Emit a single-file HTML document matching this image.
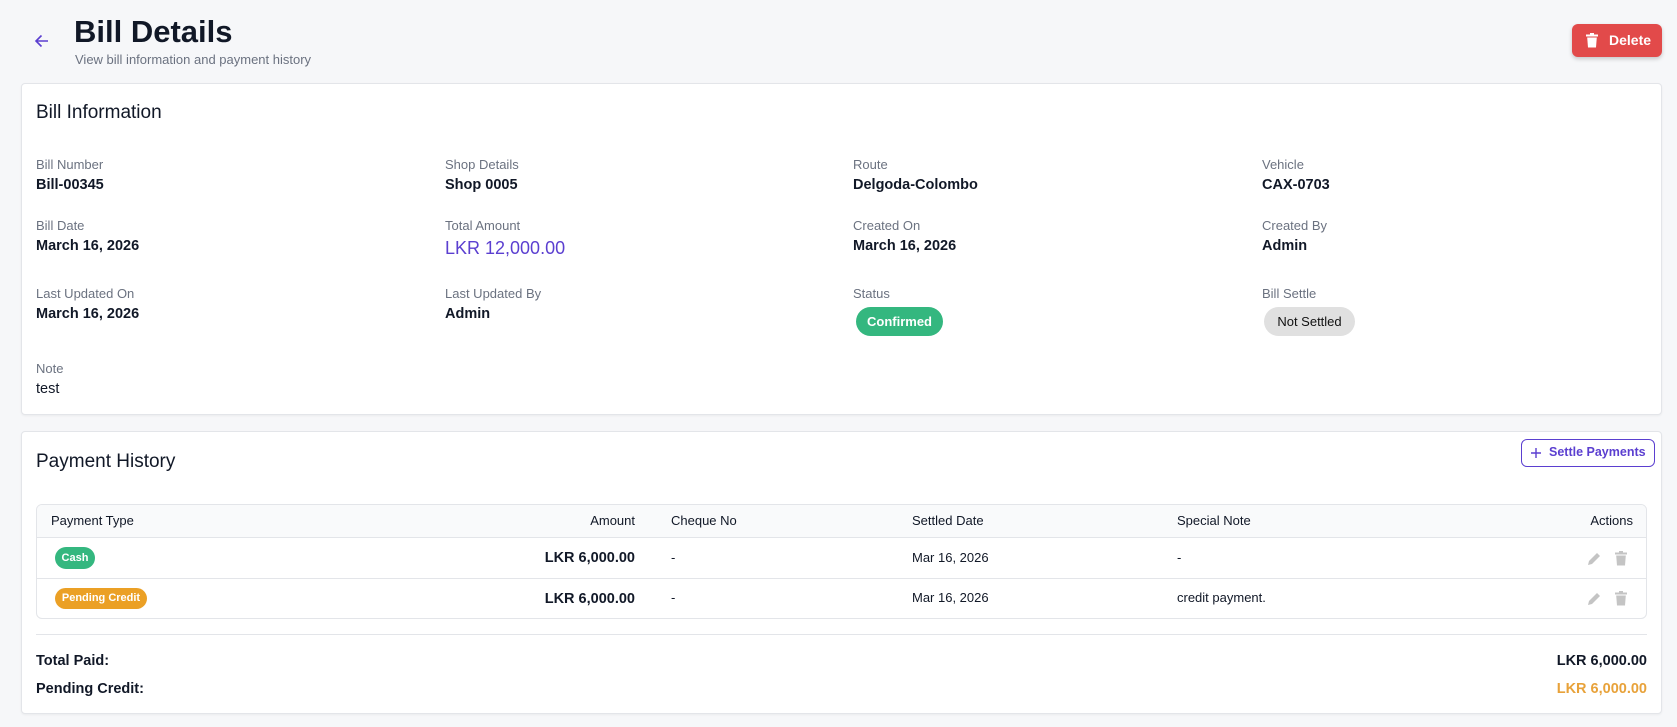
<!DOCTYPE html>
<html><head><meta charset="utf-8"><style>
*{box-sizing:border-box;margin:0;padding:0}
body{width:1677px;height:727px;background:#f6f7f9;font-family:"Liberation Sans",sans-serif;color:#111827;position:relative;overflow:hidden}
.a{position:absolute;white-space:nowrap}
.card{position:absolute;background:#fff;border:1px solid #e3e5e9;border-radius:4px;box-shadow:0 1px 2px rgba(0,0,0,.05)}
.lbl{font-size:13px;color:#6b7280;line-height:16px}
.val{font-size:14.5px;font-weight:bold;color:#111827;line-height:18px}
.h2{font-size:19px;color:#111827}
.th{font-size:13px;color:#111827;line-height:16px}
.td{font-size:13px;color:#111827;line-height:16px}
</style></head><body>
<svg class="a" style="left:34px;top:33px" width="16" height="16" viewBox="0 0 16 16"><path d="M14 8H2M7.5 2.5L2 8l5.5 5.5" stroke="#5b3fd0" stroke-width="1.6" fill="none"/></svg>
<div class="a" style="left:74px;top:13px;font-size:31px;font-weight:bold;line-height:38px">Bill Details</div>
<div class="a" style="left:75px;top:52px;font-size:13px;color:#6b7280;line-height:16px">View bill information and payment history</div>
<div class="a" style="left:1572px;top:24px;width:90px;height:33px;background:#e24a4a;border-radius:6px;box-shadow:0 2px 4px rgba(0,0,0,.2)"></div>
<svg class="a" style="left:1586px;top:33px" width="12" height="15" viewBox="0 0 12 15"><rect x="0" y="1.5" width="12" height="2" fill="#fff"/><rect x="4" y="0" width="4" height="2" fill="#fff"/><path d="M1.2 4.5h9.6l-.8 10H2z" fill="#fff"/></svg>
<div class="a" style="left:1609px;top:32px;font-size:14px;font-weight:bold;color:#fff;line-height:17px">Delete</div>

<div class="card" style="left:21px;top:83px;width:1641px;height:332px"></div>
<div class="a h2" style="left:36px;top:102px">Bill Information</div>

<div class="a lbl" style="left:36px;top:157px">Bill Number</div><div class="a val" style="left:36px;top:176px">Bill-00345</div>
<div class="a lbl" style="left:445px;top:157px">Shop Details</div><div class="a val" style="left:445px;top:176px">Shop 0005</div>
<div class="a lbl" style="left:853px;top:157px">Route</div><div class="a val" style="left:853px;top:176px">Delgoda-Colombo</div>
<div class="a lbl" style="left:1262px;top:157px">Vehicle</div><div class="a val" style="left:1262px;top:176px">CAX-0703</div>

<div class="a lbl" style="left:36px;top:218px">Bill Date</div><div class="a val" style="left:36px;top:237px">March 16, 2026</div>
<div class="a lbl" style="left:445px;top:218px">Total Amount</div><div class="a" style="left:445px;top:237px;font-size:18px;color:#5b3fd0;line-height:22px">LKR 12,000.00</div>
<div class="a lbl" style="left:853px;top:218px">Created On</div><div class="a val" style="left:853px;top:237px">March 16, 2026</div>
<div class="a lbl" style="left:1262px;top:218px">Created By</div><div class="a val" style="left:1262px;top:237px">Admin</div>

<div class="a lbl" style="left:36px;top:286px">Last Updated On</div><div class="a val" style="left:36px;top:305px">March 16, 2026</div>
<div class="a lbl" style="left:445px;top:286px">Last Updated By</div><div class="a val" style="left:445px;top:305px">Admin</div>
<div class="a lbl" style="left:853px;top:286px">Status</div>
<div class="a" style="left:856px;top:307px;width:87px;height:29px;border-radius:15px;background:#34b77f;color:#fff;font-size:13px;font-weight:bold;line-height:29px;text-align:center">Confirmed</div>
<div class="a lbl" style="left:1262px;top:286px">Bill Settle</div>
<div class="a" style="left:1264px;top:307px;width:91px;height:29px;border-radius:15px;background:#e0e0e0;color:#111;font-size:13px;line-height:29px;text-align:center">Not Settled</div>

<div class="a lbl" style="left:36px;top:361px">Note</div><div class="a" style="left:36px;top:380px;font-size:14.5px;line-height:18px">test</div>

<div class="card" style="left:21px;top:431px;width:1641px;height:283px"></div>
<div class="a h2" style="left:36px;top:451px">Payment History</div>
<div class="a" style="left:1521px;top:439px;width:134px;height:28px;border:1px solid #5b3fd0;border-radius:6px"></div>
<svg class="a" style="left:1530px;top:447px" width="12" height="12" viewBox="0 0 12 12"><path d="M6 1v10M1 6h10" stroke="#5b3fd0" stroke-width="1.4"/></svg>
<div class="a" style="left:1549px;top:445px;font-size:12.5px;font-weight:bold;color:#5b3fd0;line-height:15px">Settle Payments</div>

<div class="a" style="left:36px;top:504px;width:1611px;height:115px;border:1px solid #e3e5e9;border-radius:6px;overflow:hidden">
 <div style="height:33px;background:#f9fafb;border-bottom:1px solid #e3e5e9"></div>
 <div style="height:41px;border-bottom:1px solid #e3e5e9"></div>
</div>
<div class="a th" style="left:51px;top:513px">Payment Type</div>
<div class="a th" style="right:1042px;top:513px">Amount</div>
<div class="a th" style="left:671px;top:513px">Cheque No</div>
<div class="a th" style="left:912px;top:513px">Settled Date</div>
<div class="a th" style="left:1177px;top:513px">Special Note</div>
<div class="a th" style="right:44px;top:513px">Actions</div>

<div class="a" style="left:55px;top:547px;width:40px;height:22px;border-radius:11px;background:#34b77f;color:#fff;font-size:11px;font-weight:bold;line-height:22px;text-align:center">Cash</div>
<div class="a" style="right:1042px;top:549px;font-size:14.5px;font-weight:bold;line-height:18px">LKR 6,000.00</div>
<div class="a td" style="left:671px;top:550px">-</div>
<div class="a td" style="left:912px;top:550px">Mar 16, 2026</div>
<div class="a td" style="left:1177px;top:550px">-</div>

<div class="a" style="left:55px;top:588px;width:92px;height:21px;border-radius:11px;background:#eba025;color:#fff;font-size:11px;font-weight:bold;line-height:21px;text-align:center">Pending Credit</div>
<div class="a" style="right:1042px;top:590px;font-size:14.5px;font-weight:bold;line-height:18px">LKR 6,000.00</div>
<div class="a td" style="left:671px;top:590px">-</div>
<div class="a td" style="left:912px;top:590px">Mar 16, 2026</div>
<div class="a td" style="left:1177px;top:590px">credit payment.</div>

<svg class="a" style="left:1587px;top:551px" width="15" height="15" viewBox="0 0 15 15"><path d="M1 14l1-4 8-8 3 3-8 8z" fill="#c4c4c4"/></svg>
<svg class="a" style="left:1615px;top:551px" width="12" height="15" viewBox="0 0 12 15"><rect x="0" y="1.5" width="12" height="2" fill="#c4c4c4"/><rect x="4" y="0" width="4" height="2" fill="#c4c4c4"/><path d="M1.2 4.5h9.6l-.8 10H2z" fill="#c4c4c4"/></svg>
<svg class="a" style="left:1587px;top:591px" width="15" height="15" viewBox="0 0 15 15"><path d="M1 14l1-4 8-8 3 3-8 8z" fill="#c4c4c4"/></svg>
<svg class="a" style="left:1615px;top:591px" width="12" height="15" viewBox="0 0 12 15"><rect x="0" y="1.5" width="12" height="2" fill="#c4c4c4"/><rect x="4" y="0" width="4" height="2" fill="#c4c4c4"/><path d="M1.2 4.5h9.6l-.8 10H2z" fill="#c4c4c4"/></svg>

<div class="a" style="left:36px;top:634px;width:1611px;height:1px;background:#e3e5e9"></div>
<div class="a" style="left:36px;top:652px;font-size:14.5px;font-weight:bold;line-height:18px">Total Paid:</div>
<div class="a" style="right:30px;top:652px;font-size:14.5px;font-weight:bold;line-height:18px">LKR 6,000.00</div>
<div class="a" style="left:36px;top:680px;font-size:14.5px;font-weight:bold;line-height:18px">Pending Credit:</div>
<div class="a" style="right:30px;top:680px;font-size:14.5px;font-weight:bold;line-height:18px;color:#e8a23a">LKR 6,000.00</div>
</body></html>
